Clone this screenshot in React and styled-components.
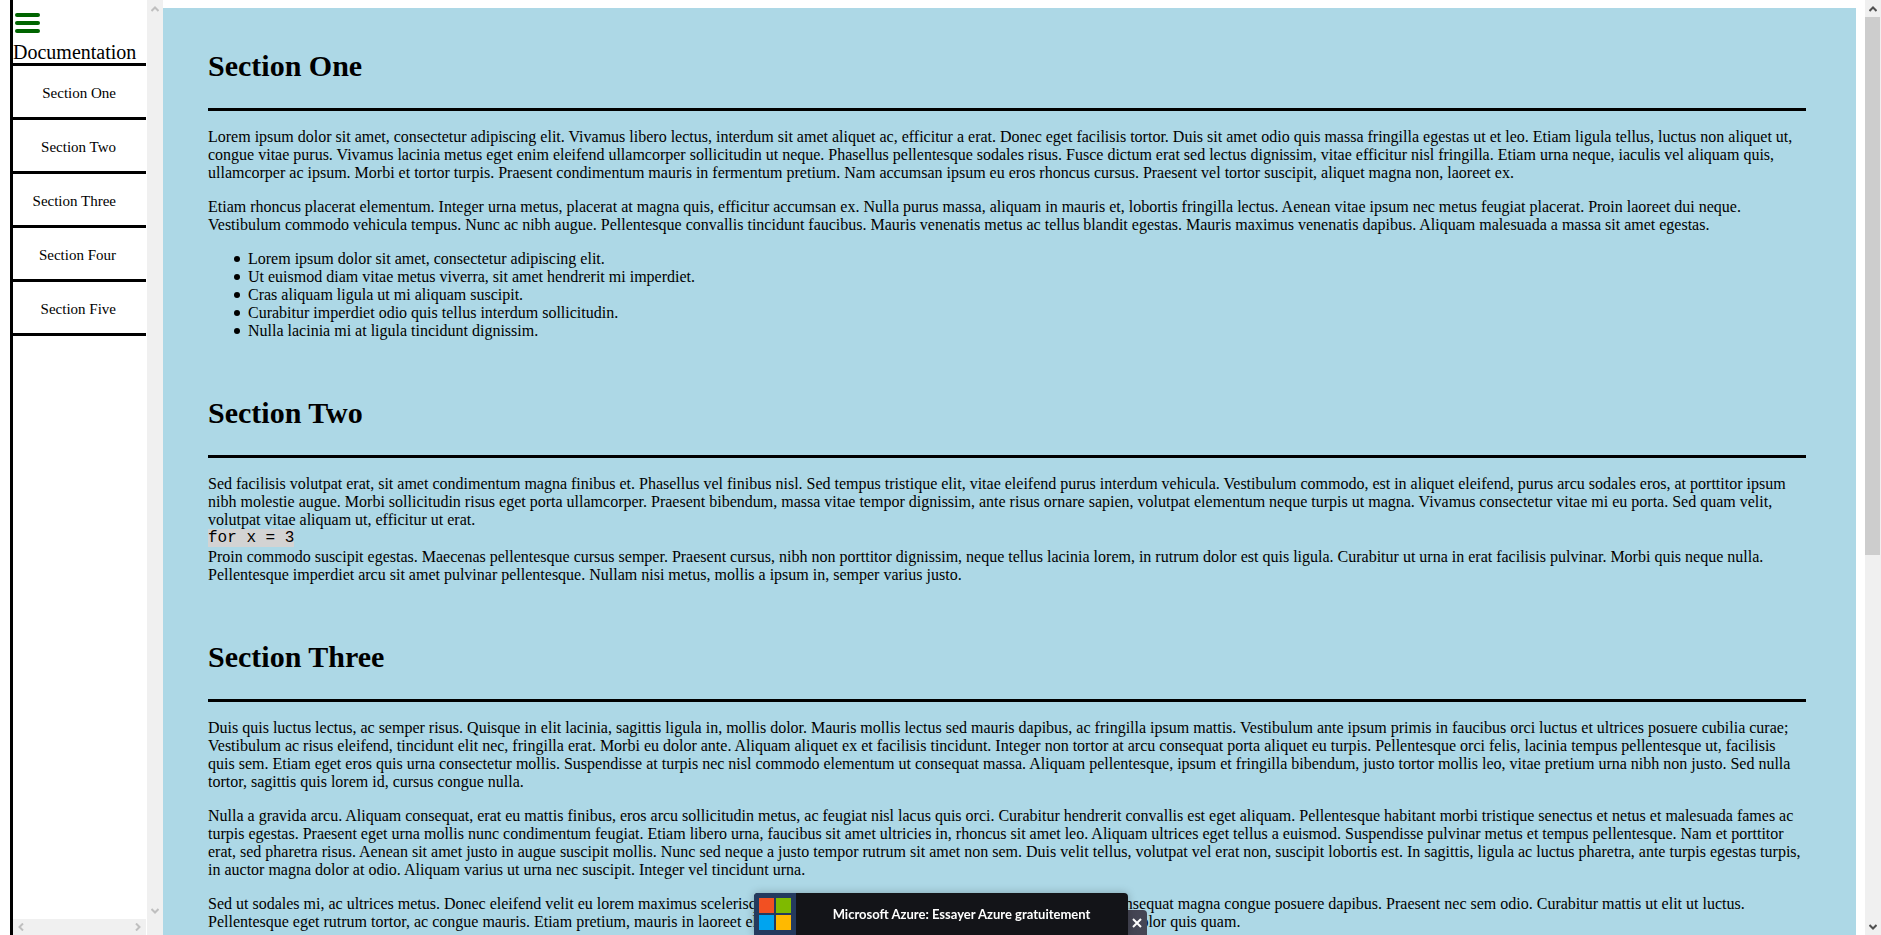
import React from "react";
import styled, { createGlobalStyle } from "styled-components";

const GlobalStyle = createGlobalStyle`
  * { box-sizing: border-box; }
  body {
    margin: 0;
    background: #fff;
    color: #000;
    font-family: "Liberation Serif", "Times New Roman", serif;
    font-size: 16px;
    line-height: 18px;
  }
`;

const Page = styled.div`
  display: flex;
  height: 100vh;
  padding-left: 10px;
  overflow: hidden;
`;

const NavPane = styled.nav`
  flex: none;
  display: flex;
  border-left: 3px solid #000;
`;

const NavColumn = styled.div`
  display: flex;
  flex-direction: column;
  width: 133px;
  margin-right: 1px;
`;

const NavBody = styled.div`
  flex: 1;
  min-height: 0;
  overflow: hidden;
`;

const NavHeader = styled.header`
  display: flex;
  flex-direction: column;
  align-items: flex-start;
  padding-top: 8px;
  border-bottom: 3px solid #000;
  font-size: 20px;
  line-height: 22px;
`;

const MenuButton = styled.button`
  display: block;
  height: 33px;
  padding: 5px 2px 8px;
  border: 0;
  background: none;

  svg { display: block; }
`;

const NavLink = styled.a`
  display: block;
  padding: 19px 30px 15px 0;
  border-bottom: 3px solid #000;
  color: #000;
  font-size: 15px;
  line-height: 17px;
  text-align: right;
  text-decoration: none;
`;

const Track = styled.div`
  flex: none;
  display: flex;
  flex-direction: ${(p) => (p.$horizontal ? "row" : "column")};
  justify-content: space-between;
  ${(p) => (p.$horizontal ? "height: 16px;" : "width: 16px;")}
  padding-bottom: ${(p) => (p.$corner ? "16px" : "0")};
  background: #f0f0f0;
  color: ${(p) => (p.$active ? "#505050" : "#bfbfbf")};
`;

const ArrowBox = styled.span`
  flex: none;
  display: flex;
  align-items: center;
  justify-content: center;
  width: 16px;
  height: ${(p) => (p.$horizontal ? "16px" : "17px")};
`;

const Thumb = styled.div`
  flex: 0 0 calc(60% - 23px);
  width: 15px;
  margin-bottom: auto;
  background: #cdcdcd;
`;

const ARROWS = {
  up: "M0.5 6L4 2.5L7.5 6",
  down: "M0.5 2L4 5.5L7.5 2",
  left: "M6 0.5L2.5 4L6 7.5",
  right: "M2 0.5L5.5 4L2 7.5",
};

function Arrow({ direction, horizontal }) {
  return (
    <ArrowBox $horizontal={horizontal}>
      <svg width="8" height="8" viewBox="0 0 8 8" fill="none" stroke="currentColor" strokeWidth="2">
        <path d={ARROWS[direction]} />
      </svg>
    </ArrowBox>
  );
}

const Main = styled.main`
  flex: 1;
  min-width: 0;
  align-self: flex-start;
  margin: 8px 9px 0 0;
  padding: 0 50px 45px 45px;
  background: #add8e6;
`;

const Section = styled.section`
  padding-top: ${(p) => (p.$first ? "40px" : "55px")};
`;

const Title = styled.h1`
  margin: 0 0 17px;
  padding-bottom: 24px;
  border-bottom: 3px solid #000;
  font-size: 30px;
  line-height: 36px;
`;

const Paragraph = styled.p`
  margin: 0 0 16px;

  &:last-child { margin-bottom: 0; }
`;

const List = styled.ul`
  margin: 0;
  padding-left: 40px;
  list-style: none;
`;

const ListItem = styled.li`
  position: relative;

  &::before {
    content: "";
    position: absolute;
    top: 6px;
    left: -14px;
    width: 6px;
    height: 6px;
    border-radius: 50%;
    background: #000;
  }
`;

const Code = styled.code`
  display: block;
  width: fit-content;
  margin-bottom: 1px;
  background: #d3d3d3;
  font-family: "Liberation Mono", "Courier New", monospace;
  font-size: 16px;
  line-height: 18px;
`;

const BannerRow = styled.aside`
  position: fixed;
  right: 0;
  bottom: 0;
  left: 0;
  display: flex;
  justify-content: center;
  font-family: Lato, sans-serif;
`;

const Banner = styled.div`
  position: relative;
  width: 374px;
  height: 42px;
`;

const BannerLink = styled.a`
  position: relative;
  z-index: 1;
  display: flex;
  height: 100%;
  overflow: hidden;
  border-radius: 4px 4px 0 0;
  background: #131418;
  box-shadow: 0 0 8px rgba(0, 0, 0, 0.25);
  color: #fff;
  font-size: 13px;
  font-weight: 700;
  text-decoration: none;
`;

const LogoBox = styled.span`
  display: flex;
  align-items: center;
  justify-content: center;
  width: 42px;
  background: #243a5e;
`;

const BannerText = styled.span`
  flex: 1;
  align-self: center;
  text-align: center;
`;

const CloseButton = styled.button`
  position: absolute;
  bottom: 0;
  left: 100%;
  display: flex;
  align-items: center;
  justify-content: center;
  width: 19px;
  height: 25px;
  padding: 0;
  border: 0;
  border-radius: 0 4px 0 0;
  background: #454654;
  color: #fff;
`;

const NAV_ITEMS = ["Section One", "Section Two", "Section Three", "Section Four", "Section Five"];

const LIST_ITEMS = [
  "Lorem ipsum dolor sit amet, consectetur adipiscing elit.",
  "Ut euismod diam vitae metus viverra, sit amet hendrerit mi imperdiet.",
  "Cras aliquam ligula ut mi aliquam suscipit.",
  "Curabitur imperdiet odio quis tellus interdum sollicitudin.",
  "Nulla lacinia mi at ligula tincidunt dignissim.",
];

const toId = (name) => name.replace(" ", "_");

function DocSection({ title, first, children }) {
  return (
    <Section id={toId(title)} $first={first}>
      <Title>{title}</Title>
      {children}
    </Section>
  );
}

export default function App() {
  return (
    <>
      <GlobalStyle />
      <Page>
        <NavPane aria-label="Documentation">
          <NavColumn>
            <NavBody>
              <NavHeader>
                <MenuButton type="button" aria-label="Menu">
                  <svg width="25" height="20" viewBox="0 0 25 20" fill="#006400">
                    <rect width="25" height="4" rx="2" />
                    <rect y="8" width="25" height="4" rx="2" />
                    <rect y="16" width="25" height="4" rx="2" />
                  </svg>
                </MenuButton>
                Documentation
              </NavHeader>
              {NAV_ITEMS.map((name) => (
                <NavLink key={name} href={`#${toId(name)}`}>{name}</NavLink>
              ))}
            </NavBody>
            <Track $horizontal aria-hidden="true">
              <Arrow direction="left" horizontal />
              <Arrow direction="right" horizontal />
            </Track>
          </NavColumn>
          <Track $corner aria-hidden="true">
            <Arrow direction="up" />
            <Arrow direction="down" />
          </Track>
        </NavPane>

        <Main>
          <DocSection title="Section One" first>
            <Paragraph>
              Lorem ipsum dolor sit amet, consectetur adipiscing elit. Vivamus libero lectus, interdum sit amet aliquet ac, efficitur a erat. Donec eget facilisis tortor. Duis sit amet odio quis massa fringilla egestas ut et leo. Etiam ligula tellus, luctus non aliquet ut, congue vitae purus. Vivamus lacinia metus eget enim eleifend ullamcorper sollicitudin ut neque. Phasellus pellentesque sodales risus. Fusce dictum erat sed lectus dignissim, vitae efficitur nisl fringilla. Etiam urna neque, iaculis vel aliquam quis, ullamcorper ac ipsum. Morbi et tortor turpis. Praesent condimentum mauris in fermentum pretium. Nam accumsan ipsum eu eros rhoncus cursus. Praesent vel tortor suscipit, aliquet magna non, laoreet ex.
            </Paragraph>
            <Paragraph>
              Etiam rhoncus placerat elementum. Integer urna metus, placerat at magna quis, efficitur accumsan ex. Nulla purus massa, aliquam in mauris et, lobortis fringilla lectus. Aenean vitae ipsum nec metus feugiat placerat. Proin laoreet dui neque. Vestibulum commodo vehicula tempus. Nunc ac nibh augue. Pellentesque convallis tincidunt faucibus. Mauris venenatis metus ac tellus blandit egestas. Mauris maximus venenatis dapibus. Aliquam malesuada a massa sit amet egestas.
            </Paragraph>
            <List>
              {LIST_ITEMS.map((item) => (
                <ListItem key={item}>{item}</ListItem>
              ))}
            </List>
          </DocSection>

          <DocSection title="Section Two">
            <Paragraph as="div">
              Sed facilisis volutpat erat, sit amet condimentum magna finibus et. Phasellus vel finibus nisl. Sed tempus tristique elit, vitae eleifend purus interdum vehicula. Vestibulum commodo, est in aliquet eleifend, purus arcu sodales eros, at porttitor ipsum nibh molestie augue. Morbi sollicitudin risus eget porta ullamcorper. Praesent bibendum, massa vitae tempor dignissim, ante risus ornare sapien, volutpat elementum neque turpis ut magna. Vivamus consectetur vitae mi eu porta. Sed quam velit, volutpat vitae aliquam ut, efficitur ut erat.
              <Code>for x = 3</Code>
              Proin commodo suscipit egestas. Maecenas pellentesque cursus semper. Praesent cursus, nibh non porttitor dignissim, neque tellus lacinia lorem, in rutrum dolor est quis ligula. Curabitur ut urna in erat facilisis pulvinar. Morbi quis neque nulla. Pellentesque imperdiet arcu sit amet pulvinar pellentesque. Nullam nisi metus, mollis a ipsum in, semper varius justo.
            </Paragraph>
          </DocSection>

          <DocSection title="Section Three">
            <Paragraph>
              Duis quis luctus lectus, ac semper risus. Quisque in elit lacinia, sagittis ligula in, mollis dolor. Mauris mollis lectus sed mauris dapibus, ac fringilla ipsum mattis. Vestibulum ante ipsum primis in faucibus orci luctus et ultrices posuere cubilia curae; Vestibulum ac risus eleifend, tincidunt elit nec, fringilla erat. Morbi eu dolor ante. Aliquam aliquet ex et facilisis tincidunt. Integer non tortor at arcu consequat porta aliquet eu turpis. Pellentesque orci felis, lacinia tempus pellentesque ut, facilisis quis sem. Etiam eget eros quis urna consectetur mollis. Suspendisse at turpis nec nisl commodo elementum ut consequat massa. Aliquam pellentesque, ipsum et fringilla bibendum, justo tortor mollis leo, vitae pretium urna nibh non justo. Sed nulla tortor, sagittis quis lorem id, cursus congue nulla.
            </Paragraph>
            <Paragraph>
              Nulla a gravida arcu. Aliquam consequat, erat eu mattis finibus, eros arcu sollicitudin metus, ac feugiat nisl lacus quis orci. Curabitur hendrerit convallis est eget aliquam. Pellentesque habitant morbi tristique senectus et netus et malesuada fames ac turpis egestas. Praesent eget urna mollis nunc condimentum feugiat. Etiam libero urna, faucibus sit amet ultricies in, rhoncus sit amet leo. Aliquam ultrices eget tellus a euismod. Suspendisse pulvinar metus et tempus pellentesque. Nam et porttitor erat, sed pharetra risus. Aenean sit amet justo in augue suscipit mollis. Nunc sed neque a justo tempor rutrum sit amet non sem. Duis velit tellus, volutpat vel erat non, suscipit lobortis est. In sagittis, ligula ac luctus pharetra, ante turpis egestas turpis, in auctor magna dolor at odio. Aliquam varius ut urna nec suscipit. Integer vel tincidunt urna.
            </Paragraph>
            <Paragraph>
              Sed ut sodales mi, ac ultrices metus. Donec eleifend velit eu lorem maximus scelerisque. Vestibulum vitae lorem at nibh mollis lacinia. Duis consequat magna congue posuere dapibus. Praesent nec sem odio. Curabitur mattis ut elit ut luctus. Pellentesque eget rutrum tortor, ac congue mauris. Etiam pretium, mauris in laoreet elementum, arcu nisl placerat nunc, a tempus risus erat. Sed dolor quis quam.
            </Paragraph>
          </DocSection>
        </Main>

        <Track $active aria-hidden="true">
          <Arrow direction="up" />
          <Thumb />
          <Arrow direction="down" />
        </Track>
      </Page>

      <BannerRow>
        <Banner>
          <BannerLink href="#azure">
            <LogoBox>
              <svg width="32" height="32" viewBox="0 0 32 32" aria-hidden="true">
                <rect width="15" height="15" fill="#f25022" />
                <rect x="17" width="15" height="15" fill="#7fba00" />
                <rect y="17" width="15" height="15" fill="#00a4ef" />
                <rect x="17" y="17" width="15" height="15" fill="#ffb900" />
              </svg>
            </LogoBox>
            <BannerText>Microsoft Azure: Essayer Azure gratuitement</BannerText>
          </BannerLink>
          <CloseButton type="button" aria-label="Fermer">
            <svg width="10" height="10" viewBox="0 0 10 10" fill="none" stroke="currentColor" strokeWidth="2">
              <path d="M1 1L9 9M9 1L1 9" />
            </svg>
          </CloseButton>
        </Banner>
      </BannerRow>
    </>
  );
}
